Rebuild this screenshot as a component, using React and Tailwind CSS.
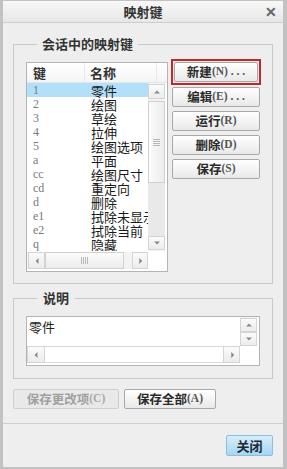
import React from "react";

const cjk = "font-['Noto_Sans_CJK_SC','Noto_Sans',sans-serif]";

function Arrow({ dir, className = "" }) {
  const pts = {
    up: "1,6 5,2 9,6",
    down: "1,2 5,6 9,2",
    left: "6,1 2,5 6,9",
    right: "3,1 7,5 3,9",
  }[dir];
  const vb = dir === "up" || dir === "down" ? "0 0 10 8" : "0 0 8 10";
  const w = dir === "up" || dir === "down" ? 8 : 6;
  const h = dir === "up" || dir === "down" ? 6 : 8;
  return (
    <svg width={w} height={h} viewBox={vb} className={className}>
      <polygon points={pts} fill="#8a8a8a" />
    </svg>
  );
}

function ScrollBtn({ dir, className = "" }) {
  return (
    <div
      className={`flex items-center justify-center border border-[#d4d4d4] bg-gradient-to-b from-[#fbfbfb] to-[#ececec] ${className}`}
    >
      <Arrow dir={dir} />
    </div>
  );
}

function Btn({ label, key2, dots, className = "", disabled }) {
  return (
    <div
      className={`flex items-center justify-center rounded-[2px] border ${
        disabled
          ? "border-[#cfcfcf] bg-[#e9e9e9] text-[#a0a0a0]"
          : "border-[#a9a9a9] bg-gradient-to-b from-[#ffffff] to-[#e9e9e9] text-[#2a2a2a]"
      } ${className}`}
    >
      <span className={`${cjk} text-[12.5px] font-bold leading-none`}>{label}</span>
      <span
        className={`font-['Liberation_Serif',serif] text-[11.5px] font-bold leading-none ${
          disabled ? "text-[#a8a8a8]" : "text-[#555]"
        }`}
      >
        ({key2}){dots ? " . . ." : ""}
      </span>
    </div>
  );
}

const rows = [
  ["1", "零件"],
  ["2", "绘图"],
  ["3", "草绘"],
  ["4", "拉伸"],
  ["5", "绘图选项"],
  ["a", "平面"],
  ["cc", "绘图尺寸"],
  ["cd", "重定向"],
  ["d", "删除"],
  ["e1", "拭除未显示"],
  ["e2", "拭除当前"],
  ["q", "隐藏"],
];

export default function App() {
  return (
    <div className="h-[469px] w-[287px] overflow-hidden bg-[#c2c2c2] pb-[2px] pl-[3px] pr-[4px] pt-[1px]">
      <div className="flex h-full flex-col bg-[#eeeeee]">
        {/* Title bar */}
        <div className="relative flex h-[22px] shrink-0 items-center justify-center border-b border-[#cdcdcd] bg-gradient-to-b from-[#f8f8f8] to-[#e7e7e7]">
          <span className={`${cjk} text-[13px] font-bold leading-none text-[#333]`}>映射键</span>
          <span className="absolute right-[6px] top-[4px] font-['Liberation_Sans',sans-serif] text-[14px] font-bold leading-none text-[#666]">
            ✕
          </span>
        </div>

        <div className="flex flex-1 flex-col px-[10px]">
          {/* Group 1 */}
          <fieldset className="mt-[12px] border border-[#c9c9c9] pb-[11px] pl-[12px] pr-[11px] pt-[6px]">
            <legend className={`${cjk} ml-[11px] px-[5px] text-[13px] font-bold leading-[18px] text-[#333]`}>
              会话中的映射键
            </legend>
            <div className="flex items-start">
              {/* List */}
              <div className="mt-[3px] flex h-[210px] w-[142px] flex-col border border-[#b4b4b4] bg-white">
                <div className="flex h-[20px] shrink-0 items-center border-b border-[#e6e6e6] bg-gradient-to-b from-[#ffffff] to-[#f4f4f4]">
                  <div className={`${cjk} flex h-full w-[58px] items-center border-r border-[#e8e8e8] pl-[6px] text-[13px] font-bold text-[#333]`}>
                    键
                  </div>
                  <div className={`${cjk} flex h-full w-[72px] items-center border-r border-[#e8e8e8] pl-[5px] text-[13px] font-bold text-[#333]`}>
                    名称
                  </div>
                </div>
                <div className="flex h-[168px] shrink-0">
                  <div className="w-[121px] overflow-hidden">
                    {rows.map(([k, n], i) => (
                      <div
                        key={k}
                        className={`flex h-[14px] items-center whitespace-nowrap ${i === 0 ? "bg-[#b2e0f8]" : ""}`}
                      >
                        <span className="w-[58px] shrink-0 pl-[6px] font-['Liberation_Serif',serif] text-[12px] leading-none text-[#7a7a7a]">
                          {k}
                        </span>
                        <span className={`${cjk} pl-[6px] text-[13px] leading-none text-[#1a1a1a]`}>{n}</span>
                      </div>
                    ))}
                  </div>
                  <div className="flex w-[17px] flex-col bg-[#f3f3f3] py-[1px]">
                    <ScrollBtn dir="up" className="h-[15px] shrink-0" />
                    <div className="mt-[2px] flex h-[82px] shrink-0 items-center justify-center border border-[#d0d0d0] bg-gradient-to-r from-[#fbfbfb] to-[#ececec]">
                      <div className="flex flex-col gap-[1px]">
                        <div className="h-px w-[7px] bg-[#b8b8b8]" />
                        <div className="h-px w-[7px] bg-[#b8b8b8]" />
                        <div className="h-px w-[7px] bg-[#b8b8b8]" />
                        <div className="h-px w-[7px] bg-[#b8b8b8]" />
                      </div>
                    </div>
                    <div className="flex-1 bg-[#e9e9e9]" />
                    <ScrollBtn dir="down" className="h-[14px] shrink-0" />
                  </div>
                </div>
                <div className="mt-[1px] flex h-[17px] shrink-0">
                  <div className="flex w-[121px] bg-[#f3f3f3]">
                    <ScrollBtn dir="left" className="ml-[1px] w-[17px] shrink-0" />
                    <div className="flex w-[79px] shrink-0 items-center justify-center border border-[#d0d0d0] bg-gradient-to-b from-[#fbfbfb] to-[#ececec]">
                      <div className="flex gap-[1px]">
                        <div className="h-[7px] w-px bg-[#b8b8b8]" />
                        <div className="h-[7px] w-px bg-[#b8b8b8]" />
                        <div className="h-[7px] w-px bg-[#b8b8b8]" />
                        <div className="h-[7px] w-px bg-[#b8b8b8]" />
                      </div>
                    </div>
                    <div className="flex-1" />
                    <ScrollBtn dir="right" className="w-[16px] shrink-0" />
                  </div>
                </div>
              </div>

              {/* Buttons */}
              <div className="ml-[3px] flex flex-col">
                <div className="h-[26px] w-[90px] border-2 border-[#c1272d] p-px">
                  <Btn label="新建" key2="N" dots className="h-full" />
                </div>
                <Btn label="编辑" key2="E" dots className="ml-px mt-[2px] h-[20px] w-[88px]" />
                <Btn label="运行" key2="R" className="ml-px mt-[4px] h-[20px] w-[88px]" />
                <Btn label="删除" key2="D" className="ml-px mt-[4px] h-[20px] w-[88px]" />
                <Btn label="保存" key2="S" className="ml-px mt-[4px] h-[20px] w-[88px]" />
              </div>
            </div>
          </fieldset>

          {/* Group 2 */}
          <fieldset className="mt-[5px] border border-[#c9c9c9] pb-[12px] pl-[12px] pt-[9px]">
            <legend className={`${cjk} ml-[11px] px-[6px] text-[13px] font-bold leading-[18px] text-[#333]`}>
              说明
            </legend>
            <div className="flex h-[50px] w-[234px] flex-col border border-[#b4b4b4] bg-white">
              <div className="flex h-[29px] shrink-0">
                <div className={`${cjk} w-[213px] pl-[2px] pt-px text-[13px] leading-[18px] text-[#222]`}>零件</div>
                <div className="flex w-[17px] flex-col bg-[#f3f3f3] pt-px">
                  <ScrollBtn dir="up" className="h-[14px] shrink-0" />
                  <ScrollBtn dir="down" className="h-[14px] shrink-0" />
                </div>
              </div>
              <div className="flex h-[17px] w-[213px] shrink-0 bg-[#f3f3f3]">
                <ScrollBtn dir="left" className="w-[18px] shrink-0" />
                <div className="flex-1 border-y border-[#d8d8d8] bg-white" />
                <ScrollBtn dir="right" className="w-[17px] shrink-0" />
              </div>
            </div>
          </fieldset>

          {/* Save buttons */}
          <div className="mt-[10px] flex gap-[5px]">
            <Btn label="保存更改项" key2="C" disabled className="h-[20px] w-[106px]" />
            <Btn label="保存全部" key2="A" className="h-[20px] w-[92px]" />
          </div>
        </div>

        {/* Footer */}
        <div className="mt-auto flex h-[44px] shrink-0 flex-col border-t border-[#cfcfcf] px-[10px] pt-[11px]">
          <div className="flex justify-end">
            <div className="flex h-[21px] w-[47px] items-center justify-center rounded-[2px] border border-[#8fbddb] bg-gradient-to-b from-[#d6eefc] to-[#a6d5f2]">
              <span className={`${cjk} text-[13px] font-bold leading-none text-[#1e2b36]`}>关闭</span>
            </div>
          </div>
        </div>
      </div>
    </div>
  );
}
